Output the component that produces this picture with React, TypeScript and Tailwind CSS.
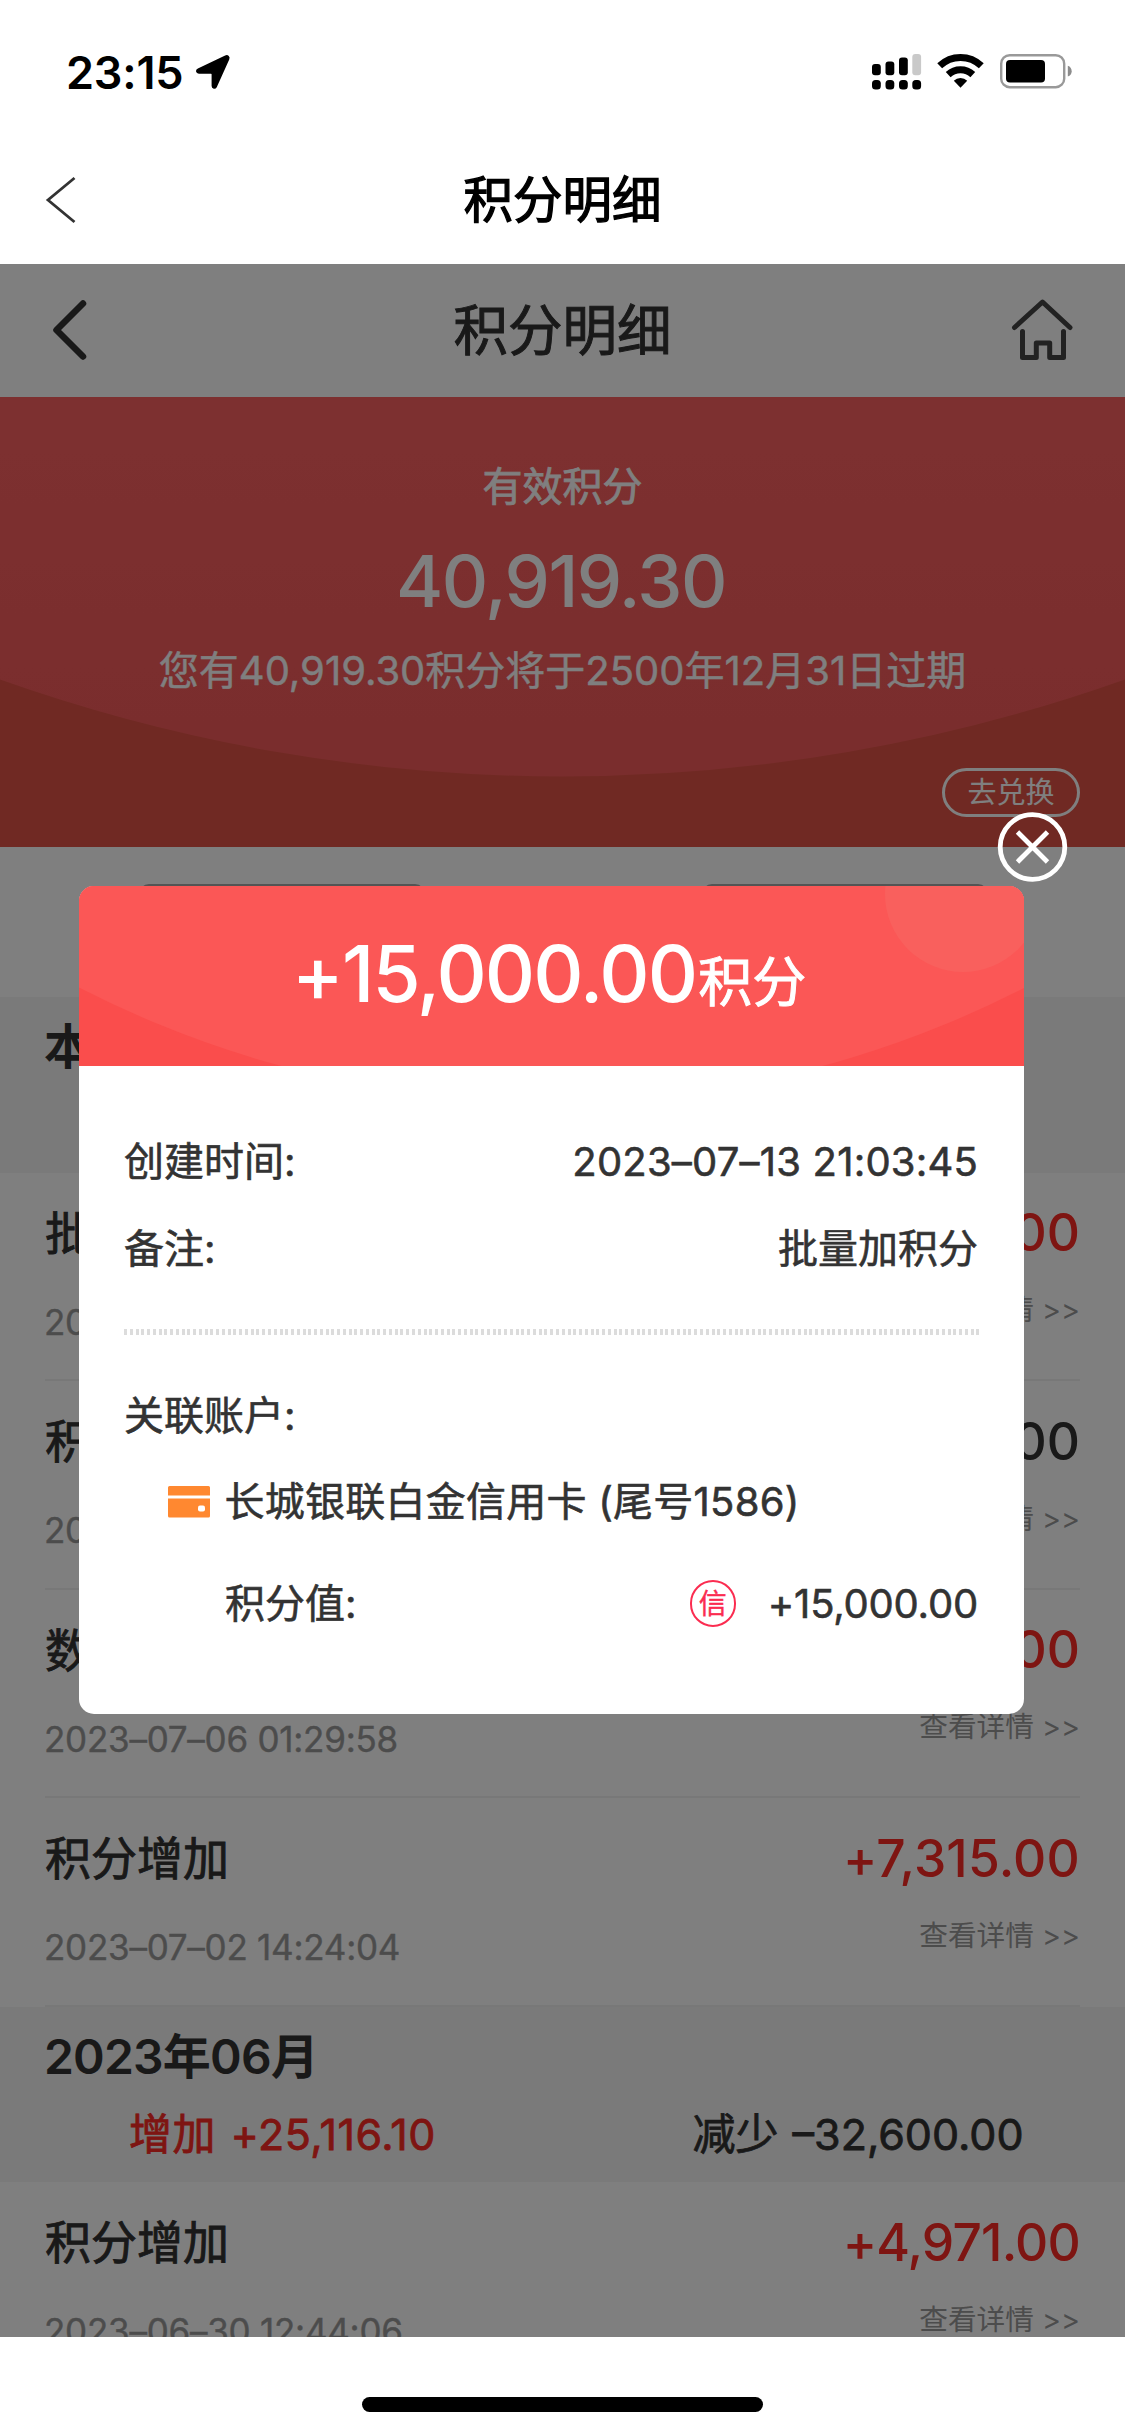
import React from 'react';

type Entry = { title: string; date: string; amount: string; tone: string };

const july: Entry[] = [
  { title: '批', date: '20', amount: '00', tone: 'text-[#fc2a24]' },
  { title: '积', date: '20', amount: '00', tone: 'text-[#333]' },
  { title: '数', date: '2023–07–06 01:29:58', amount: '00', tone: 'text-[#fc2a24]' },
  { title: '积分增加', date: '2023–07–02 14:24:04', amount: '+7,315.00', tone: 'text-[#fc2a24] tracking-[0.2px]' },
];
const june: Entry[] = [
  { title: '积分增加', date: '2023–06–30 12:44:06', amount: '+4,971.00', tone: 'text-[#fc2a24] tracking-[-0.8px]' },
];

function StatusBar() {
  return (
    <div className="flex h-[141px] shrink-0 justify-between pl-[66px] pr-[53px]">
      <div className="flex h-[144px] items-center">
        <span className="text-[45px] font-semibold leading-none tracking-[-0.2px]">23:15</span>
        <svg className="ml-[12px]" width="36" height="36" viewBox="0 0 36 36">
          <path d="M3.200 15.200 30.500 2.200c2.200-1 4 .8 3 3L21 32.800c-.9 1.900-3.600 1.500-3.600-.7V20.300c0-.9-.5-1.400-1.400-1.400H3.900c-2.400 0-2.900-2.700-.7-3.700Z" fill="#000" stroke="#000" strokeWidth="1.600" strokeLinejoin="round" />
        </svg>
      </div>
      <svg className="mt-[50px]" width="202" height="42" viewBox="0 0 202 42">
        <g fill="#000">
          <rect x="2" y="14" width="8.800" height="11.200" rx="3" />
          <rect x="15.500" y="11.500" width="8.800" height="13.700" rx="3" />
          <rect x="29" y="7.500" width="8.800" height="17.700" rx="3" />
          <rect x="42.300" y="4" width="8.800" height="21.200" rx="3" fill="#c9c9c9" />
          <rect x="2" y="30" width="8.800" height="9.500" rx="3.500" />
          <rect x="15.500" y="30" width="8.800" height="9.500" rx="3.500" />
          <rect x="29" y="30" width="8.800" height="9.500" rx="3.500" />
          <rect x="42.300" y="30" width="8.800" height="9.500" rx="3.500" />
        </g>
        <g fill="none" stroke="#000" strokeWidth="7">
          <path d="M69.700 15.800a30 30 0 0 1 41.600 0" />
          <path d="M78.200 24.600a18 18 0 0 1 24.600 0" />
        </g>
        <path d="M83.800 30.800a9.500 9.500 0 0 1 13.400 0L90.500 37.800Z" fill="#000" />
        <rect x="131.200" y="5.200" width="63" height="32" rx="8.500" fill="none" stroke="#999" strokeWidth="2.400" />
        <rect x="136" y="10" width="39" height="22.500" rx="4" fill="#000" />
        <path d="M197.800 15.800c5.200 1.600 5.200 9.200 0 10.800Z" fill="#8c8c8c" />
      </svg>
    </div>
  );
}

function NavBar() {
  return (
    <div className="grid h-[123px] shrink-0 grid-cols-[200px_1fr_200px] items-center pb-[6px]">
      <svg className="ml-[44px]" width="34" height="50" viewBox="0 0 34 50">
        <path d="M30.500 3 4 25 30.500 47" fill="none" stroke="#333" strokeWidth="2.800" />
      </svg>
      <h1 className="text-center text-[49.500px] leading-[60px] [-webkit-text-stroke:1.3px_#000]">积分明细</h1>
    </div>
  );
}

function PageHeader() {
  return (
    <div className="grid h-[133px] grid-cols-[200px_1fr_200px] items-center bg-white pb-px text-[#333]">
      <svg className="ml-[50px]" width="40" height="66" viewBox="0 0 40 66">
        <path d="M33 6.500 6.500 33 33 59.500" fill="none" stroke="#333" strokeWidth="6.500" strokeLinecap="round" strokeLinejoin="round" />
      </svg>
      <h2 className="text-center text-[54.500px] leading-[66px] [-webkit-text-stroke:1px_#333]">积分明细</h2>
      <svg className="ml-[84px]" width="66" height="66" viewBox="0 0 66 66">
        <g fill="none" stroke="#444" strokeWidth="5" strokeLinecap="round" strokeLinejoin="round">
          <path d="M5.500 30.500 33.500 5l27.500 25.500" />
          <path d="M13.500 34.500V60.500h13.800V46h13.400v14.500H54.500v-26" />
        </g>
      </svg>
    </div>
  );
}

function Balance() {
  return (
    <div className="relative h-[450px] overflow-hidden bg-[#e05346] text-white">
      <svg className="absolute inset-0" width="1125" height="450" viewBox="0 0 1125 450">
        <defs>
          <linearGradient id="wave" x1="0" y1="0" x2="0" y2="1">
            <stop offset="0" stopColor="#fb6161" />
            <stop offset="1" stopColor="#f45a5a" />
          </linearGradient>
        </defs>
        <path d="M0 0H1125V282.500A1680 1680 0 0 1 0 282.500Z" fill="url(#wave)" />
      </svg>
      <div className="relative flex flex-col items-center pt-[66px]">
        <p className="text-[40px] leading-[48px] [-webkit-text-stroke:0.8px_#fff]">有效积分</p>
        <p className="mt-[26px] mr-[3px] text-[72px] font-medium leading-[88px] tracking-[-1.5px]">40,919.30</p>
        <p className="mt-[22px] text-[40px] leading-[48px] [-webkit-text-stroke:0.4px_#fff]">
          您有40,919.30积分将于2500年12月31日过期
        </p>
      </div>
      <div className="relative mt-[73px] flex justify-end pr-[45px]">
        <div className="flex h-[49px] w-[138px] items-center justify-center rounded-full border-[3px] border-white pb-px text-[29px] leading-none">
          去兑换
        </div>
      </div>
    </div>
  );
}

function Tabs() {
  return (
    <div className="grid h-[150px] grid-cols-2 bg-white pt-[37px]">
      <div className="ml-[139px] h-[70px] w-[286px] rounded-[10px] border-[3px] border-[#a8a8a8]" />
      <div className="ml-[139px] h-[70px] w-[286px] rounded-[10px] border-[3px] border-[#a8a8a8]" />
    </div>
  );
}

function Month({ label, up, down }: { label: string; up?: string; down?: string }) {
  return (
    <div className="h-[175.500px] bg-[#f4f4f4] pt-[20px] text-[#333]">
      <h3 className="pl-[44px] text-[48px] font-semibold leading-[60px] tracking-[-0.8px]">{label}</h3>
      {up && (
        <div className="mt-[22px] grid grid-cols-2 text-[43px] leading-[50px]">
          <span className="pl-[129px] tracking-[0.5px] [word-spacing:2px] text-[#fc2a24] [-webkit-text-stroke:0.8px_#fc2a24]">增加 {up}</span>
          <span className="pl-[130px] [word-spacing:2px] [-webkit-text-stroke:0.8px_#333]">减少 {down}</span>
        </div>
      )}
    </div>
  );
}

function Row({ e }: { e: Entry }) {
  return (
    <div className="mx-[45px] flex h-[208.500px] justify-between border-b-2 border-[#f0f0f0] bg-white">
      <div className="pt-[32px]">
        <p className="text-[46px] leading-[56px] text-[#333] [-webkit-text-stroke:0.9px_#333]">{e.title}</p>
        <p className="-ml-px mt-[39px] text-[35px] leading-[44px] tracking-[-0.25px] text-[#999] [-webkit-text-stroke:0.4px_#999]">{e.date}</p>
      </div>
      <div className="pt-[29.500px] text-right">
        <p className={`text-[51.500px] font-medium leading-[60px] ${e.tone}`}>{e.amount}</p>
        <p className="mt-[28px] text-[28.700px] leading-[40px] text-[#999]">查看详情 &gt;&gt;</p>
      </div>
    </div>
  );
}

function Modal() {
  return (
    <div className="absolute left-[79px] top-[622px] h-[828px] w-[945px] overflow-hidden rounded-[15px] bg-white text-[40px] leading-[48px] text-[#333] [-webkit-text-stroke:0.6px_#333]">
      <div className="relative h-[179.500px] overflow-hidden bg-[#fa4d4c]">
        <svg className="absolute inset-0" width="945" height="180" viewBox="0 0 945 180">
          <circle cx="473" cy="-818" r="1034" fill="#fb5756" />
          <circle cx="884" cy="8" r="78" fill="#f9605d" />
        </svg>
        <div className="relative mr-[5px] flex items-baseline justify-center pt-[40.500px] text-white [-webkit-text-stroke:0px]">
          <span className="text-[78px] font-medium leading-[94px] tracking-[-1.900px]">+15,000.00</span>
          <span className="ml-[2px] text-[54px] leading-[60px] [-webkit-text-stroke:1px_#fff]">积分</span>
        </div>
      </div>
      <div className="pl-[45px] pr-[46px] pt-[72.500px]">
        <div className="flex justify-between">
          <span>创建时间:</span>
          <span className="tracking-[0.2px]">2023–07–13 21:03:45</span>
        </div>
        <div className="mt-[38.500px] flex justify-between">
          <span>备注:</span>
          <span>批量加积分</span>
        </div>
        <div className="-mr-px mt-[56.500px] h-[6px] bg-[repeating-linear-gradient(90deg,#dcdcdc_0px,#dcdcdc_3px,#fff_3px,#fff_5.760px)]" />
        <p className="mt-[57px]">关联账户:</p>
        <div className="mt-[38px] flex items-center">
          <svg className="ml-[44px]" width="42" height="32" viewBox="0 0 42 32">
            <path d="M1.500 0h39q1.500 0 1.500 1.500V9.500H0V1.500Q0 0 1.500 0ZM0 12.500H42V30q0 1.500-1.500 1.500h-39Q0 31.500 0 30Z" fill="#ff8830" />
            <rect x="30" y="19.500" width="7" height="6" rx="2" fill="#fff" />
          </svg>
          <span className="ml-[14.500px] tracking-[0.25px]">长城银联白金信用卡 (尾号1586)</span>
        </div>
        <div className="mt-[53.500px] flex items-center">
          <span className="ml-[101px]">积分值:</span>
          <span className="ml-auto mr-[32px] flex h-[47px] w-[46px] items-center justify-center rounded-full border-[2.500px] border-[#fb2c50] text-[28px] leading-none text-[#fb2c50] [-webkit-text-stroke:0.4px_#fb2c50]">
            信
          </span>
          <span className="tracking-[-0.2px]">+15,000.00</span>
        </div>
      </div>
    </div>
  );
}

export default function App() {
  return (
    <div className="flex h-[2435px] w-[1125px] flex-col overflow-hidden bg-white font-['Inter','Noto_Sans_CJK_SC',sans-serif] text-black">
      <StatusBar />
      <NavBar />
      <main className="relative h-[2073px] shrink-0 overflow-hidden bg-white">
        <PageHeader />
        <Balance />
        <Tabs />
        <Month label="本" />
        {july.map((e, i) => <Row key={i} e={e} />)}
        <Month label="2023年06月" up="+25,116.10" down="–32,600.00" />
        {june.map((e, i) => <Row key={i} e={e} />)}
        <div className="absolute inset-0 bg-black/50" />
        <Modal />
        <svg className="absolute left-[997px] top-[547px]" width="72" height="72" viewBox="0 0 72 72">
          <g fill="none" stroke="#fff" strokeWidth="4.800">
            <circle cx="35.500" cy="36" r="32.300" />
            <path d="M20.500 21 50.500 51M50.500 21 20.500 51" />
          </g>
        </svg>
      </main>
      <div className="flex h-[98px] shrink-0 justify-center pt-[60px]">
        <div className="h-[15px] w-[401px] rounded-full bg-black" />
      </div>
    </div>
  );
}
